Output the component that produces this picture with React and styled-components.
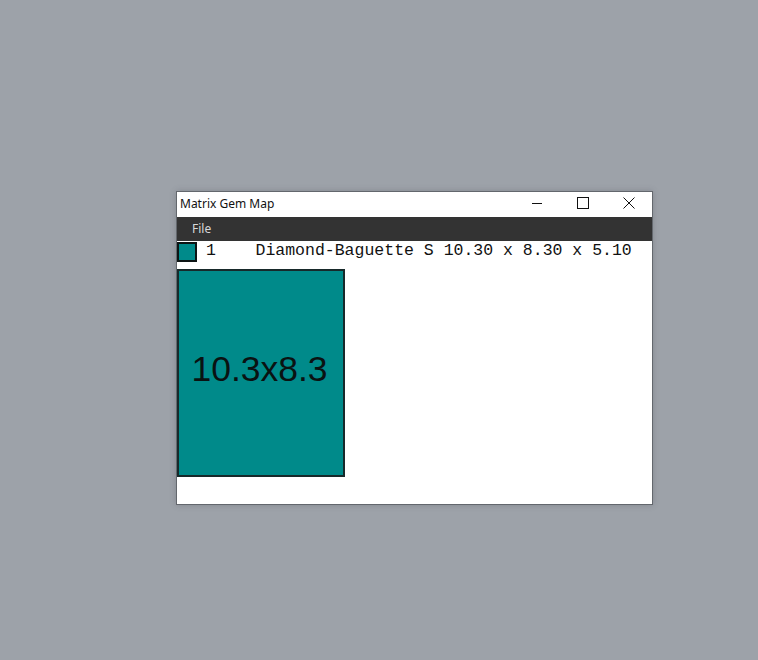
import React from "react";
import styled, { createGlobalStyle } from "styled-components";

const GlobalStyle = createGlobalStyle`
  html, body {
    margin: 0;
    padding: 0;
    background: #9da2a9;
  }
`;

const gems = [
  { id: 1, name: "Diamond-Baguette S", size: "10.30 x 8.30 x 5.10", label: "10.3x8.3", color: "#008a8a" },
];

const Minimize = () => (
  <svg width="12" height="12" viewBox="0 0 12 12">
    <path d="M1 6.5h10" stroke="#111" strokeWidth="1" />
  </svg>
);

const Maximize = () => (
  <svg width="12" height="12" viewBox="0 0 12 12">
    <rect x="0.5" y="0.5" width="11" height="11" fill="none" stroke="#111" strokeWidth="1" />
  </svg>
);

const Close = () => (
  <svg width="12" height="12" viewBox="0 0 12 12">
    <path d="M0.5 0.5l11 11M11.5 0.5l-11 11" stroke="#111" strokeWidth="1" />
  </svg>
);

const App = () => (
  <>
    <GlobalStyle />
    <Desktop>
      <Window>
        <TitleBar>
          <Title>Matrix Gem Map</Title>
          <Controls>
            <ControlButton><Minimize /></ControlButton>
            <ControlButton><Maximize /></ControlButton>
            <ControlButton><Close /></ControlButton>
          </Controls>
        </TitleBar>
        <MenuBar>
          <MenuItem>File</MenuItem>
        </MenuBar>
        <Content>
          {gems.map((gem) => (
            <GemRow key={gem.id}>
              <Swatch color={gem.color} />
              <GemText>
                {`${gem.id}    ${gem.name} ${gem.size}`}
              </GemText>
            </GemRow>
          ))}
          <Canvas>
            {gems.map((gem) => (
              <GemBox key={gem.id} color={gem.color}>
                {gem.label}
              </GemBox>
            ))}
          </Canvas>
        </Content>
      </Window>
    </Desktop>
  </>
);

export default App;

const Desktop = styled.div`
  width: 758px;
  height: 660px;
  box-sizing: border-box;
  padding: 191px 0 0 176px;
`;

const Window = styled.div`
  width: 477px;
  height: 314px;
  box-sizing: border-box;
  border: 1px solid #63676d;
  background: #fff;
  display: flex;
  flex-direction: column;
  box-shadow: 0 0 6px rgba(60, 60, 70, 0.25);
`;

const TitleBar = styled.div`
  height: 25px;
  display: flex;
  align-items: center;
  justify-content: space-between;
  background: #fff;
`;

const Title = styled.span`
  font-family: "Noto Sans", "Open Sans", sans-serif;
  font-size: 12px;
  color: #111;
  padding-left: 3px;
  margin-top: -2px;
`;

const Controls = styled.div`
  display: flex;
  height: 100%;
`;

const ControlButton = styled.div`
  width: 46px;
  height: 100%;
  display: flex;
  align-items: center;
  justify-content: center;
  margin-top: -2px;
`;

const MenuBar = styled.div`
  height: 24px;
  background: #333333;
  display: flex;
  align-items: center;
  padding-left: 8px;
`;

const MenuItem = styled.span`
  font-family: "Noto Sans", "Open Sans", sans-serif;
  font-size: 12px;
  color: #d8d8d8;
  padding: 0 7px;
  margin-top: -2px;
`;

const Content = styled.div`
  flex: 1;
  display: flex;
  flex-direction: column;
`;

const GemRow = styled.div`
  height: 22px;
  display: flex;
  align-items: center;
`;

const Swatch = styled.div`
  width: 20px;
  height: 20px;
  box-sizing: border-box;
  border: 2px solid #0c1414;
  background: ${(p) => p.color};
`;

const GemText = styled.pre`
  margin: -3px 0 0 9px;
  font-family: "Liberation Mono", "Courier New", monospace;
  font-size: 16.5px;
  color: #111;
`;

const Canvas = styled.div`
  display: flex;
  padding: 6px 0 0 0;
`;

const GemBox = styled.div`
  width: 168px;
  height: 208px;
  box-sizing: border-box;
  border: 2px solid #17292a;
  background: ${(p) => p.color};
  display: flex;
  align-items: center;
  justify-content: center;
  padding: 0 3px 7px 0;
  font-family: "Liberation Sans", Arial, sans-serif;
  font-size: 35.5px;
  color: #0a1212;
`;
